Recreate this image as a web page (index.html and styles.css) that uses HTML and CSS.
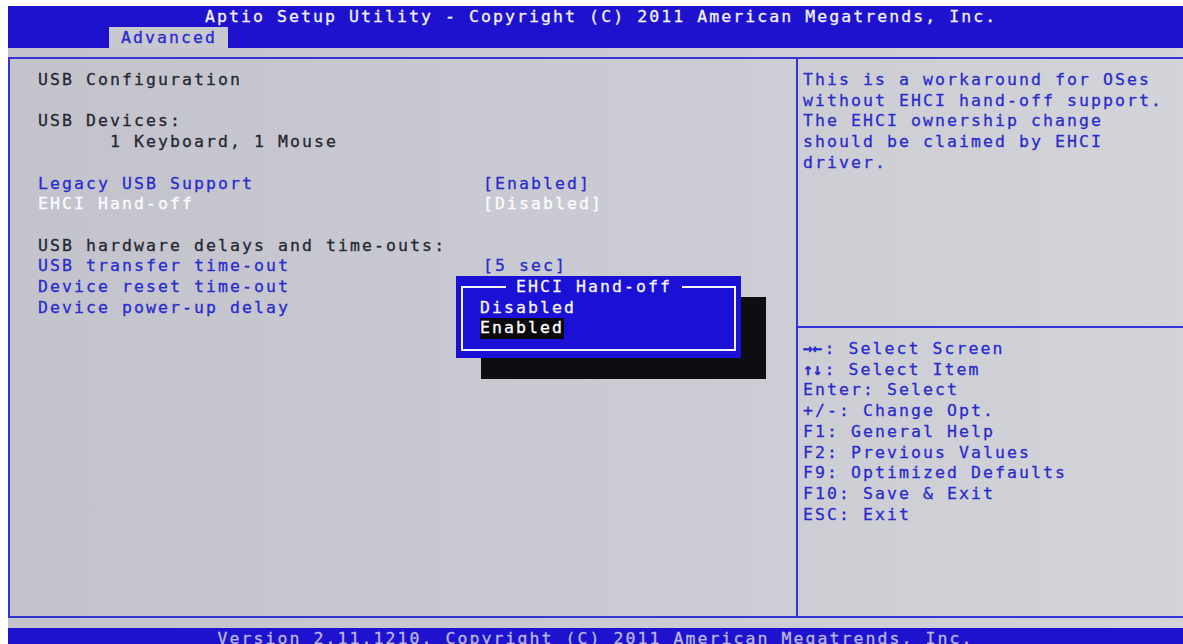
FILE: index.html
```html
<!DOCTYPE html>
<html lang="en">
<head>
<meta charset="utf-8">
<title>Aptio Setup Utility</title>
<link rel="stylesheet" href="styles.css">
</head>
<body>
<div class="screen">
  <header class="topbar">
    <div class="title">Aptio Setup Utility - Copyright (C) 2011 American Megatrends, Inc.</div>
    <nav class="tabs"><span class="tab active">Advanced</span></nav>
  </header>

  <main class="workspace">
    <div class="frame">
      <section class="settings">
        <div class="row text-dark">USB Configuration</div>
        <div class="row"></div>
        <div class="row text-dark">USB Devices:</div>
        <div class="row text-dark indent">1 Keyboard, 1 Mouse</div>
        <div class="row"></div>
        <div class="row item"><span class="label">Legacy USB Support</span><span class="value">[Enabled]</span></div>
        <div class="row item selected"><span class="label">EHCI Hand-off</span><span class="value">[Disabled]</span></div>
        <div class="row"></div>
        <div class="row text-dark">USB hardware delays and time-outs:</div>
        <div class="row item"><span class="label">USB transfer time-out</span><span class="value">[5 sec]</span></div>
        <div class="row item"><span class="label">Device reset time-out</span><span class="value"></span></div>
        <div class="row item"><span class="label">Device power-up delay</span><span class="value"></span></div>
      </section>

      <aside class="help">
        <div class="help-text">
          <div class="row">This is a workaround for OSes</div>
          <div class="row">without EHCI hand-off support.</div>
          <div class="row">The EHCI ownership change</div>
          <div class="row">should be claimed by EHCI</div>
          <div class="row">driver.</div>
        </div>
        <div class="keys">
          <div class="row"><span class="arrows">→←</span>: Select Screen</div>
          <div class="row"><span class="arrows">↑↓</span>: Select Item</div>
          <div class="row">Enter: Select</div>
          <div class="row">+/-: Change Opt.</div>
          <div class="row">F1: General Help</div>
          <div class="row">F2: Previous Values</div>
          <div class="row">F9: Optimized Defaults</div>
          <div class="row">F10: Save &amp; Exit</div>
          <div class="row">ESC: Exit</div>
        </div>
      </aside>

      <div class="popup">
        <fieldset class="popup-box">
          <legend class="popup-title">EHCI Hand-off</legend>
          <div class="row option">Disabled</div>
          <div class="row option"><span class="option-current">Enabled</span></div>
        </fieldset>
      </div>
    </div>
  </main>

  <footer class="footer">Version 2.11.1210. Copyright (C) 2011 American Megatrends, Inc.</footer>
</div>
</body>
</html>
```

FILE: styles.css
```css
html, body {
  margin: 0;
  padding: 0;
  background: #ffffff;
  overflow: hidden;
}

body {
  font-family: "DejaVu Sans Mono", "Liberation Mono", monospace;
  font-size: 16.5px;
  letter-spacing: 2.07px;
  -webkit-text-stroke: 0.3px currentColor;
}

.screen {
  padding: 6px 0 0 8px;
  height: 644px;
  box-sizing: border-box;
  display: flex;
  flex-direction: column;
}

.row {
  height: 20.73px;
  line-height: 20.73px;
  white-space: pre;
}

/* Top bar with title and tab strip */
.topbar {
  height: 42px;
  flex: none;
  background: #1f12cf;
  color: #f2f2f8;
  display: flex;
  flex-direction: column;
}

.title {
  height: 21px;
  line-height: 22px;
  padding-left: 197px;
  white-space: pre;
}

.tabs {
  display: flex;
  padding-left: 101px;
}

.tab {
  height: 21px;
  line-height: 22px;
  padding: 0 11px 0 12px;
}

.tab.active {
  background: #c7c8d0;
  color: #2a2ad4;
}

/* Grey work area */
.workspace {
  height: 580px;
  flex: none;
  box-sizing: border-box;
  padding: 9px 0 10px 0;
  background: linear-gradient(to right, #c2c3cb 0%, #cbccd3 55%, #d3d4d9 100%);
}

.frame {
  position: relative;
  height: 561px;
  box-sizing: border-box;
  border-top: 2px solid #3434d6;
  border-bottom: 2px solid #3434d6;
  border-left: 2px solid #3434d6;
  display: flex;
}

.settings {
  width: 786px;
  flex: none;
  box-sizing: border-box;
  padding: 11px 0 0 28px;
}

.text-dark {
  color: #272733;
}

.indent {
  padding-left: 72px;
}

.item {
  display: grid;
  grid-template-columns: 445px 1fr;
  color: #2b2bcc;
}

.item.selected {
  color: #fbfbff;
}

/* Right hand help column */
.help {
  flex: 1;
  border-left: 2px solid #3434d6;
  display: flex;
  flex-direction: column;
  color: #2b2bcc;
}

.help-text {
  height: 267px;
  flex: none;
  box-sizing: border-box;
  padding: 11px 0 0 5px;
}

.keys {
  flex: 1;
  border-top: 2px solid #3434d6;
  padding: 11px 0 0 5px;
}

.arrows {
  font-weight: bold;
  letter-spacing: -0.5px;
  padding-right: 2.6px;
}

/* Option pop-up */
.popup {
  position: absolute;
  left: 446px;
  top: 217px;
  width: 285px;
  height: 82px;
  box-sizing: border-box;
  padding-top: 1px;
  background: #1a10d6;
  box-shadow: 25px 21px 0 0 #0e0e12;
  color: #f6f6fa;
}

.popup-box {
  margin: 0 5px;
  padding: 0 0 10px 17px;
  border: 2px solid #f2f2f8;
  min-width: 0;
}

.popup-title {
  margin-left: 26px;
  padding: 0 10px;
  height: 20.73px;
  line-height: 20.73px;
  white-space: pre;
}

.option-current {
  display: inline-block;
  background: #0b0b0f;
  color: #ffffff;
  margin-right: -2.07px;
}

/* Bottom status bar */
.footer {
  flex: 1;
  background: #1f12cf;
  color: #b9b9e0;
  text-align: center;
  line-height: 21px;
  white-space: pre;
}
```
